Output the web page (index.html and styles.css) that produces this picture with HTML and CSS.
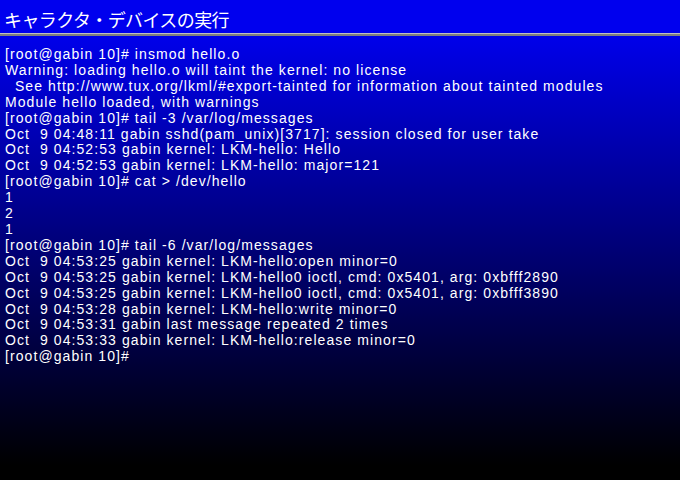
FILE: index.html
```html
<!DOCTYPE html>
<html>
<head>
<meta charset="utf-8">
<link rel="stylesheet" href="styles.css">
</head>
<body>
<div class="screen">
  <header class="titlebar">
    <h1 class="title">キャラクタ・デバイスの実行</h1>
  </header>
  <div class="rule"></div>
  <pre class="term">[root@gabin 10]# insmod hello.o
Warning: loading hello.o will taint the kernel: no license
  See http://www.tux.org/lkml/#export-tainted for information about tainted modules
Module hello loaded, with warnings
[root@gabin 10]# tail -3 /var/log/messages
Oct  9 04:48:11 gabin sshd(pam_unix)[3717]: session closed for user take
Oct  9 04:52:53 gabin kernel: LKM-hello: Hello
Oct  9 04:52:53 gabin kernel: LKM-hello: major=121
[root@gabin 10]# cat &gt; /dev/hello
1
2
1
[root@gabin 10]# tail -6 /var/log/messages
Oct  9 04:53:25 gabin kernel: LKM-hello:open minor=0
Oct  9 04:53:25 gabin kernel: LKM-hello0 ioctl, cmd: 0x5401, arg: 0xbfff2890
Oct  9 04:53:25 gabin kernel: LKM-hello0 ioctl, cmd: 0x5401, arg: 0xbfff3890
Oct  9 04:53:28 gabin kernel: LKM-hello:write minor=0
Oct  9 04:53:31 gabin last message repeated 2 times
Oct  9 04:53:33 gabin kernel: LKM-hello:release minor=0
[root@gabin 10]#</pre>
</div>
</body>
</html>
```
FILE: styles.css
```css
html, body {
  margin: 0;
  padding: 0;
  background: #000;
}
.screen {
  width: 680px;
  height: 480px;
  overflow: hidden;
  background: linear-gradient(to bottom, #0000ea 36px, #000000 465px);
}
.titlebar {
  height: 33px;
  background: #0000ee;
  display: flex;
  align-items: center;
  padding-left: 4px;
}
.title {
  margin: 0;
  padding-top: 4px;
  font-family: "Noto Sans CJK JP", sans-serif;
  font-weight: normal;
  font-size: 18px;
  letter-spacing: -0.6px;
  color: #fff;
  line-height: 1;
}
.rule {
  height: 2px;
  border-top: 1px solid #c0c0c0;
  background: #808080;
}
.term {
  margin: 0;
  padding: 11px 0 0 5px;
  font-family: "Liberation Sans", sans-serif;
  font-size: 14px;
  letter-spacing: 1.08px;
  line-height: 15.9px;
  color: #fff;
  white-space: pre;
}
```
